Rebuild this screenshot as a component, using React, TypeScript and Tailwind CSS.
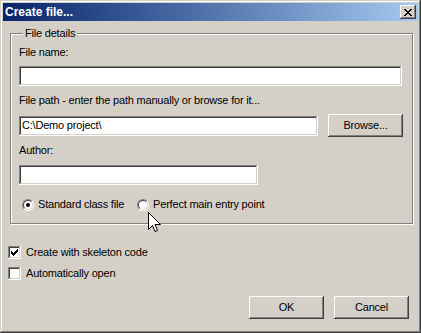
import React from 'react';

const font = "font-['Liberation_Sans',Arial,sans-serif]";
const bevelOut =
  'shadow-[inset_-1px_-1px_#404040,inset_1px_1px_#ffffff,inset_-2px_-2px_#808080,inset_2px_2px_#d4d0c8]';
const bevelIn =
  'shadow-[inset_-1px_-1px_#ffffff,inset_1px_1px_#808080,inset_-2px_-2px_#d4d0c8,inset_2px_2px_#404040]';

const TextBox: React.FC<{ width: string; value?: string }> = ({ width, value }) => (
  <div className={`${width} h-[20px] bg-white ${bevelIn} flex items-center pl-[3px] text-[11px] text-black`}>
    {value}
  </div>
);

const Button: React.FC<{ label: string }> = ({ label }) => (
  <div className={`w-[75px] h-[23px] bg-[#d4d0c8] ${bevelOut} flex items-center justify-center text-[11px] text-black`}>
    {label}
  </div>
);

const Radio: React.FC<{ checked?: boolean; label: string }> = ({ checked, label }) => (
  <div className="flex items-center">
    <div className="w-[12px] h-[12px] rounded-full bg-white border border-t-[#808080] border-l-[#808080] border-r-white border-b-white flex items-center justify-center">
      <div className="w-[10px] h-[10px] rounded-full bg-white border border-t-[#404040] border-l-[#404040] border-r-[#d4d0c8] border-b-[#d4d0c8] flex items-center justify-center">
        {checked && <div className="w-[4px] h-[4px] rounded-full bg-black" />}
      </div>
    </div>
    <span className="ml-[4px] text-[11px] leading-[13px]">{label}</span>
  </div>
);

const Checkbox: React.FC<{ checked?: boolean; label: string }> = ({ checked, label }) => (
  <div className="flex items-center">
    <div className={`w-[13px] h-[13px] bg-white ${bevelIn} flex items-center justify-center`}>
      {checked && (
        <svg width="7" height="7" viewBox="0 0 7 7">
          <path d="M0 2v3h1v1h1v1h1v-1h1v-1h1v-1h1v-1h1v-3h-1v1h-1v1h-1v1h-1v1h-1v-1h-1v-1z" fill="#000" />
        </svg>
      )}
    </div>
    <span className="ml-[5px] text-[11px] leading-[13px]">{label}</span>
  </div>
);

const App: React.FC = () => {
  return (
    <div
      className={`relative w-[421px] h-[333px] bg-[#d4d0c8] p-[3px] text-black tracking-[-0.2px] ${font} shadow-[inset_-1px_-1px_#404040,inset_1px_1px_#d4d0c8,inset_-2px_-2px_#808080,inset_2px_2px_#ffffff]`}
    >
      {/* title bar */}
      <div className="h-[18px] flex items-center justify-between bg-gradient-to-r from-[#0a246a] to-[#a6caf0]">
        <span className="pl-[2px] text-white font-bold text-[12px] leading-[14px] tracking-normal">Create file...</span>
        <div className={`mr-[2px] w-[16px] h-[14px] bg-[#d4d0c8] ${bevelOut} flex items-center justify-center`}>
          <svg width="8" height="7" viewBox="0 0 8 7">
            <path d="M0 0h2v1h1v1h2v-1h1v-1h2v1h-1v1h-1v1h-1v1h1v1h1v1h1v1h-2v-1h-1v-1h-2v1h-1v1h-2v-1h1v-1h1v-1h1v-1h-1v-1h-1v-1h-1z" fill="#000" />
          </svg>
        </div>
      </div>

      <fieldset className="mt-[6px] ml-[7px] w-[402px] border border-[#808080] shadow-[1px_1px_#ffffff,inset_1px_1px_#ffffff] pl-[8px] pr-[9px] pb-[12px]">
        <legend className="ml-[4px] px-[2px] bg-[#d4d0c8] text-[11px] leading-[13px]">File details</legend>
        <div className="mt-[6px] text-[11px] leading-[13px]">File name:</div>
        <div className="mt-[7px]">
          <TextBox width="w-[383px]" />
        </div>
        <div className="mt-[8px] text-[11px] leading-[13px]">File path - enter the path manually or browse for it...</div>
        <div className="mt-[7px] flex items-center gap-[10px]">
          <TextBox width="w-[299px]" value="C:\Demo project\" />
          <Button label="Browse..." />
        </div>
        <div className="mt-[7px] text-[11px] leading-[13px]">Author:</div>
        <div className="mt-[8px]">
          <TextBox width="w-[239px]" />
        </div>
        <div className="mt-[13px] flex items-center gap-[13px] pl-[3px]">
          <Radio checked label="Standard class file" />
          <Radio label="Perfect main entry point" />
        </div>
      </fieldset>

      <div className="mt-[22px] ml-[5px]">
        <Checkbox checked label="Create with skeleton code" />
      </div>
      <div className="mt-[8px] ml-[5px]">
        <Checkbox label="Automatically open" />
      </div>

      <div className="mt-[16px] flex justify-end gap-[10px] pr-[9px]">
        <Button label="OK" />
        <Button label="Cancel" />
      </div>

      {/* mouse pointer */}
      <svg className="absolute left-[148px] top-[212px]" width="13" height="21" viewBox="0 0 13 21">
        <path d="M0.5 0.5V17.5L4.5 13.5L7 19.5L9.5 18.5L7 12.5H12.5Z" fill="#fff" stroke="#000" strokeWidth="1" />
      </svg>
    </div>
  );
};

export default App;
